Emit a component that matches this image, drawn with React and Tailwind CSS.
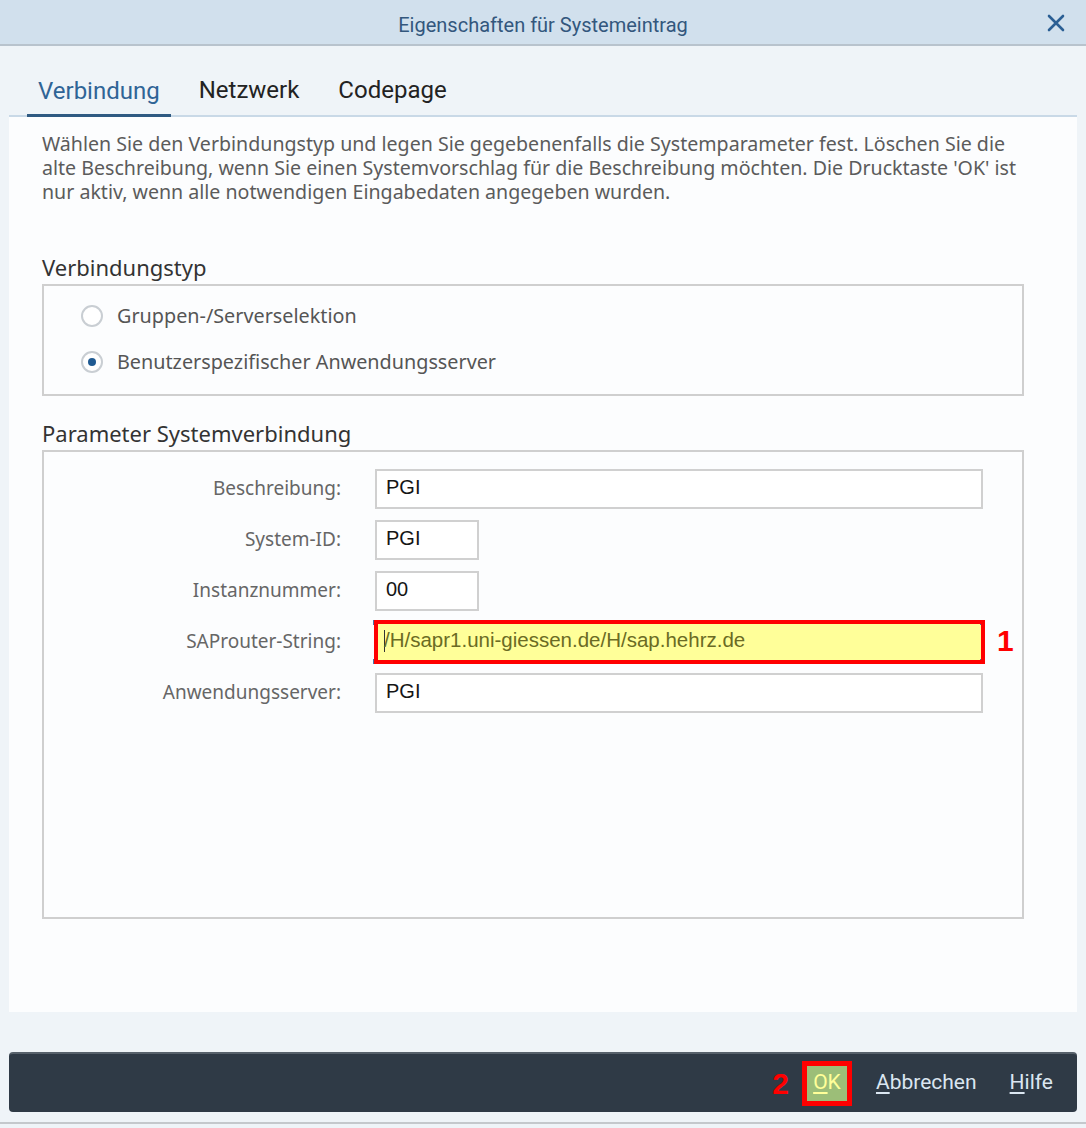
import React from 'react';

const fields = [
    { label: 'Beschreibung:', value: 'PGI', width: 'w-[608px]' },
    { label: 'System-ID:', value: 'PGI', width: 'w-[104px]' },
    { label: 'Instanznummer:', value: '00', width: 'w-[104px]' },
    { label: 'SAProuter-String:', value: '/H/sapr1.uni-giessen.de/H/sap.hehrz.de', width: 'w-[608px]', marked: true },
    { label: 'Anwendungsserver:', value: 'PGI', width: 'w-[608px]' },
];

function Radio({ checked, label }) {
    return (
        <div className="flex items-center h-[46px]">
            <span className="w-[22px] h-[22px] rounded-full border-2 border-[#c9ced3] bg-white flex items-center justify-center">
                {checked && <span className="w-[8px] h-[8px] rounded-full bg-[#1f5a92]"></span>}
            </span>
            <span className="ml-[14px] text-[19.8px] text-[#555]">{label}</span>
        </div>
    );
}

function FieldRow({ field }) {
    return (
        <div className="flex items-center h-[39px]">
            <div className="w-[297px] text-right text-[19px] text-[#666]">{field.label}</div>
            <div className="ml-[34px] relative">
                {field.marked ? (
                    <>
                        <div className={`${field.width} h-[40px] bg-[#ffff99] border border-[#c7c7c7] flex items-center pl-[8px] pb-[2px] text-[20.5px] text-[#6b6b24] font-['Liberation_Sans',Arial,sans-serif]`}>
                            <span className="w-[1px] h-[22px] bg-[#333] -mr-[1px]"></span>
                            <span>{field.value}</span>
                        </div>
                        {/* selection corners */}
                        <span className="absolute -left-[2px] -top-[2px] w-[5px] h-[5px] bg-[#4a76a8]"></span>
                        <span className="absolute -right-[2px] -top-[2px] w-[5px] h-[5px] bg-[#4a76a8]"></span>
                        <span className="absolute -left-[2px] -bottom-[2px] w-[5px] h-[5px] bg-[#4a76a8]"></span>
                        <span className="absolute -right-[2px] -bottom-[2px] w-[5px] h-[5px] bg-[#4a76a8]"></span>
                        <div className="absolute -left-[1px] -top-[2px] -right-[2px] -bottom-[2px] border-4 border-[#ff0000]"></div>
                        <span className="absolute left-[622px] top-[1px] text-[30px] leading-[36px] font-bold text-[#ff0000] font-['Liberation_Sans',Arial,sans-serif]">1</span>
                    </>
                ) : (
                    <div className={`${field.width} h-[40px] bg-white border-2 border-[#d0d0d0] flex items-center pl-[9px] pb-[4px] text-[20px] text-[#151515] font-['Liberation_Sans',Arial,sans-serif]`}>
                        {field.value}
                    </div>
                )}
            </div>
        </div>
    );
}

export default function App() {
    return (
        <div className="w-[1086px] h-[1128px] bg-[#eff4f8] flex flex-col font-['Noto_Sans',sans-serif]">
            {/* dialog title */}
            <div className="h-[46px] shrink-0 bg-[#d1e0ed] border-b-2 border-[#b8c3cd] relative flex items-center justify-center pt-[5px]">
                <span className="text-[20px] text-[#33577d] font-['Roboto',sans-serif]">Eigenschaften für Systemeintrag</span>
                <svg className="absolute right-[21px] top-[14px]" width="18" height="18" viewBox="0 0 18 18">
                    <path d="M2 2 L16 16 M16 2 L2 16" stroke="#2b5f94" strokeWidth="2.6" strokeLinecap="round" />
                </svg>
            </div>

            {/* tabs */}
            <div className="h-[71px] shrink-0 px-[9px] flex flex-col justify-end">
                <div className="flex items-end border-b-2 border-[#c9d9e7]">
                    <div className="px-[11px] pb-[5px] border-b-[3px] border-[#2f5a82] -mb-[2px] ml-[18px] text-[24px] text-[#2f6496] font-['Roboto',sans-serif]">Verbindung</div>
                    <div className="ml-[17px] px-[11px] pb-[7px] text-[24px] text-[#222] font-['Roboto',sans-serif]">Netzwerk</div>
                    <div className="ml-[17px] px-[11px] pb-[7px] text-[24px] text-[#222] font-['Roboto',sans-serif]">Codepage</div>
                </div>
            </div>

            {/* content */}
            <div className="mx-[9px] h-[895px] shrink-0 bg-[#fcfdfe] pl-[33px] pr-[53px] pt-[15px]">
                <p className="text-[19.6px] leading-[24px] text-[#5b5b5b] whitespace-nowrap">
                    Wählen Sie den Verbindungstyp und legen Sie gegebenenfalls die Systemparameter fest. Löschen Sie die<br />
                    alte Beschreibung, wenn Sie einen Systemvorschlag für die Beschreibung möchten. Die Drucktaste 'OK' ist<br />
                    nur aktiv, wenn alle notwendigen Eingabedaten angegeben wurden.
                </p>

                <h3 className="mt-[49px] text-[22px] leading-[28px] text-[#333]">Verbindungstyp</h3>
                <div className="mt-[3px] h-[112px] border-2 border-[#cfcfcf] pl-[37px] pt-[7px]">
                    <Radio label="Gruppen-/Serverselektion" />
                    <Radio checked label="Benutzerspezifischer Anwendungsserver" />
                </div>

                <h3 className="mt-[23px] text-[22px] leading-[28px] text-[#333]">Parameter Systemverbindung</h3>
                <div className="mt-[3px] h-[469px] border-2 border-[#cfcfcf] pt-[17px] flex flex-col gap-[12px]">
                    {fields.map((f) => (
                        <FieldRow key={f.label} field={f} />
                    ))}
                </div>
            </div>

            {/* button bar */}
            <div className="mt-[40px] mx-[9px] h-[60px] shrink-0 bg-[#2f3a46] rounded-[4px] border-t-2 border-[#57616b] flex items-center justify-end pr-[24px] font-['Roboto',sans-serif]">
                <span className="text-[30px] font-bold text-[#ff0000] mr-[13px] font-['Liberation_Sans',Arial,sans-serif]">2</span>
                <div className="w-[50px] h-[45px] border-[5px] border-[#ff0000] bg-[#9cbe78] flex items-center justify-center">
                    <span className="text-[21px] text-[#ffff99]"><span className="underline underline-offset-[3px]">O</span>K</span>
                </div>
                <span className="ml-[24px] text-[21px] text-[#dbe6f1]"><span className="underline underline-offset-[3px]">A</span>bbrechen</span>
                <span className="ml-[33px] text-[21px] text-[#dbe6f1]"><span className="underline underline-offset-[3px]">H</span>ilfe</span>
            </div>
            <div className="mt-[10px] h-[2px] bg-[#c4c8cc]"></div>
        </div>
    );
}
